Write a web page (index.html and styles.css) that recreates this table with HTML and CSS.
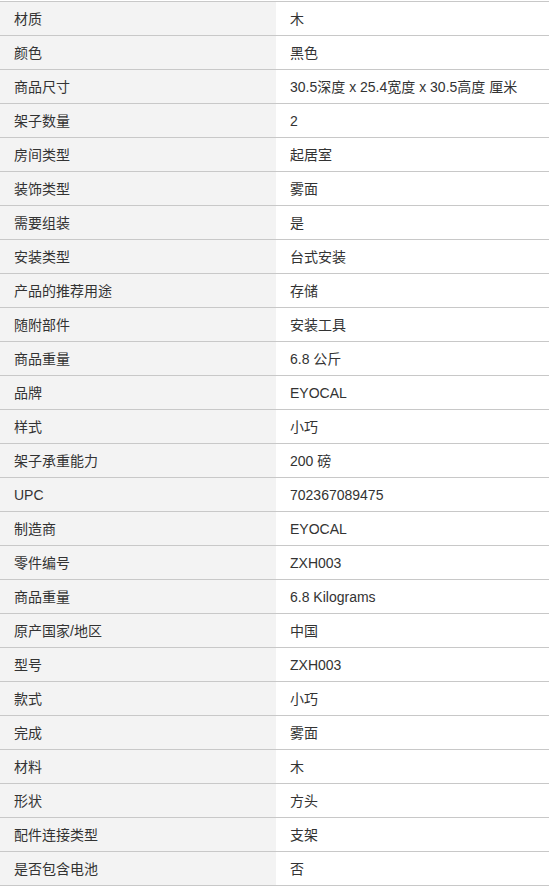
FILE: index.html
```html
<!DOCTYPE html>
<html lang="zh">
<head>
<meta charset="utf-8">
<link rel="stylesheet" href="styles.css">
</head>
<body>
<div class="spec">
  <div class="row"><div class="k">材质</div><div class="v">木</div></div>
  <div class="row"><div class="k">颜色</div><div class="v">黑色</div></div>
  <div class="row"><div class="k">商品尺寸</div><div class="v">30.5深度 x 25.4宽度 x 30.5高度 厘米</div></div>
  <div class="row"><div class="k">架子数量</div><div class="v">2</div></div>
  <div class="row"><div class="k">房间类型</div><div class="v">起居室</div></div>
  <div class="row"><div class="k">装饰类型</div><div class="v">雾面</div></div>
  <div class="row"><div class="k">需要组装</div><div class="v">是</div></div>
  <div class="row"><div class="k">安装类型</div><div class="v">台式安装</div></div>
  <div class="row"><div class="k">产品的推荐用途</div><div class="v">存储</div></div>
  <div class="row"><div class="k">随附部件</div><div class="v">安装工具</div></div>
  <div class="row"><div class="k">商品重量</div><div class="v">6.8 公斤</div></div>
  <div class="row"><div class="k">品牌</div><div class="v">EYOCAL</div></div>
  <div class="row"><div class="k">样式</div><div class="v">小巧</div></div>
  <div class="row"><div class="k">架子承重能力</div><div class="v">200 磅</div></div>
  <div class="row"><div class="k">UPC</div><div class="v">702367089475</div></div>
  <div class="row"><div class="k">制造商</div><div class="v">EYOCAL</div></div>
  <div class="row"><div class="k">零件编号</div><div class="v">ZXH003</div></div>
  <div class="row"><div class="k">商品重量</div><div class="v">6.8 Kilograms</div></div>
  <div class="row"><div class="k">原产国家/地区</div><div class="v">中国</div></div>
  <div class="row"><div class="k">型号</div><div class="v">ZXH003</div></div>
  <div class="row"><div class="k">款式</div><div class="v">小巧</div></div>
  <div class="row"><div class="k">完成</div><div class="v">雾面</div></div>
  <div class="row"><div class="k">材料</div><div class="v">木</div></div>
  <div class="row"><div class="k">形状</div><div class="v">方头</div></div>
  <div class="row"><div class="k">配件连接类型</div><div class="v">支架</div></div>
  <div class="row"><div class="k">是否包含电池</div><div class="v">否</div></div>
</div>
</body>
</html>
```

FILE: styles.css
```css
html, body {
  margin: 0;
  padding: 0;
  background: #fff;
}
body {
  padding-top: 1px;
  font-family: "Liberation Sans", Arial, "Noto Sans CJK SC", sans-serif;
  font-size: 14px;
  color: #333;
}
.spec {
  width: 549px;
  border-top: 1px solid #c8c8c8;
}
.row {
  display: grid;
  grid-template-columns: 276px 1fr;
  height: 33px;
  border-bottom: 1px solid #c8c8c8;
}
.k, .v {
  display: flex;
  align-items: center;
  line-height: 20px;
}
.k {
  background: #f3f3f3;
  padding-left: 14px;
}
.v {
  padding-left: 14px;
}
```
